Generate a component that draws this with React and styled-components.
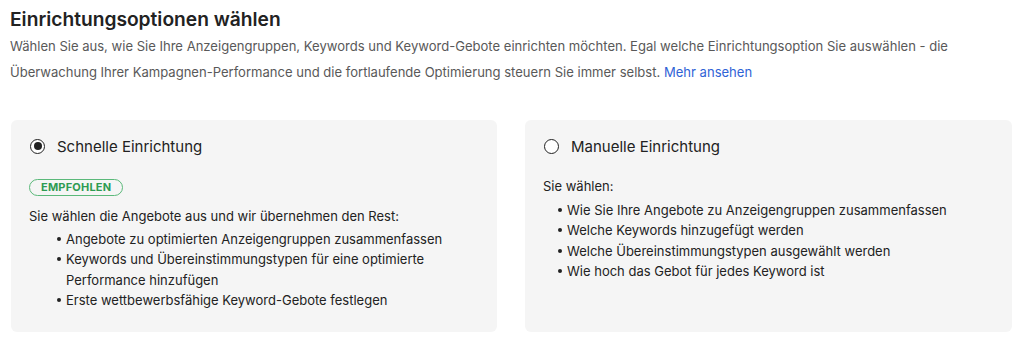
import React, { useState } from 'react';
import styled, { createGlobalStyle } from 'styled-components';

const GlobalStyle = createGlobalStyle`
  body {
    margin: 0;
    background: #ffffff;
    font-family: Inter, "Noto Sans", sans-serif;
    color: #222222;
  }
`;

const Page = styled.div`
  padding: 6px 11px 0 10px;
  width: 1024px;
  box-sizing: border-box;
`;

const Title = styled.h2`
  margin: 0;
  font-size: 19.2px;
  font-weight: 600;
  line-height: 26px;
  color: #222222;
`;

const Intro = styled.p`
  margin: 1px 0 0;
  max-width: 995px;
  font-size: 13.05px;
  line-height: 26px;
  color: #595959;
`;

const Link = styled.a`
  color: #3063d6;
  text-decoration: none;
`;

const Cards = styled.div`
  display: grid;
  grid-template-columns: 486px 487px;
  gap: 28px;
  margin-top: 35px;
  padding-left: 1px;
`;

const Card = styled.div`
  background: #f5f5f5;
  border-radius: 6px;
  height: 212px;
  box-sizing: border-box;
  padding: 15px 18px 0 18px;
  cursor: pointer;
`;

const OptionRow = styled.label`
  display: flex;
  align-items: center;
  gap: 12px;
  height: 22px;
  padding-left: 1px;
  cursor: pointer;
`;

const Radio = styled.span`
  width: 15px;
  height: 15px;
  border-radius: 50%;
  border: 1.3px solid #222222;
  box-sizing: border-box;
  display: flex;
  align-items: center;
  justify-content: center;
  background: #ffffff;
  &::after {
    content: '';
    width: 8px;
    height: 8px;
    border-radius: 50%;
    background: ${({ $checked }) => ($checked ? '#222222' : 'transparent')};
  }
`;

const OptionLabel = styled.span`
  font-size: 15px;
  color: #222222;
`;

const Badge = styled.span`
  display: inline-block;
  margin-top: 22px;
  height: 17px;
  line-height: 15px;
  box-sizing: border-box;
  padding: 0 11px;
  border: 1px solid #5bb97a;
  border-radius: 9px;
  color: #2e9b52;
  font-size: 11px;
  font-weight: 700;
  letter-spacing: 0.2px;
`;

const Lead = styled.p`
  margin: ${({ $top }) => $top}px 0 0;
  font-size: 13px;
  line-height: 20px;
  color: #222222;
`;

const List = styled.ul`
  margin: ${({ $top }) => $top}px 0 0;
  padding-left: ${({ $indent }) => $indent}px;
  list-style: none;
`;

const Item = styled.li`
  position: relative;
  font-size: 13px;
  line-height: 20.3px;
  color: #222222;
  padding-left: 9px;
  &::before {
    content: '';
    position: absolute;
    left: 0;
    top: 8px;
    width: 4px;
    height: 4px;
    border-radius: 50%;
    background: #222222;
  }
`;

const quick = [
  'Angebote zu optimierten Anzeigengruppen zusammenfassen',
  'Keywords und Übereinstimmungstypen für eine optimierte Performance hinzufügen',
  'Erste wettbewerbsfähige Keyword-Gebote festlegen',
];

const manual = [
  'Wie Sie Ihre Angebote zu Anzeigengruppen zusammenfassen',
  'Welche Keywords hinzugefügt werden',
  'Welche Übereinstimmungstypen ausgewählt werden',
  'Wie hoch das Gebot für jedes Keyword ist',
];

const App = () => {
  const [choice, setChoice] = useState('quick');

  return (
    <Page>
      <GlobalStyle />
      <Title>Einrichtungsoptionen wählen</Title>
      <Intro>
        Wählen Sie aus, wie Sie Ihre Anzeigengruppen, Keywords und Keyword-Gebote einrichten möchten. Egal welche
        Einrichtungsoption Sie auswählen - die Überwachung Ihrer Kampagnen-Performance und die fortlaufende Optimierung
        steuern Sie immer selbst. <Link href="#">Mehr ansehen</Link>
      </Intro>
      <Cards>
        <Card onClick={() => setChoice('quick')}>
          <OptionRow>
            <Radio $checked={choice === 'quick'} />
            <OptionLabel>Schnelle Einrichtung</OptionLabel>
          </OptionRow>
          <Badge>EMPFOHLEN</Badge>
          <Lead $top={10}>Sie wählen die Angebote aus und wir übernehmen den Rest:</Lead>
          <List $indent={28} $top={3}>
            {quick.map((t) => (
              <Item key={t}>{t}</Item>
            ))}
          </List>
        </Card>
        <Card onClick={() => setChoice('manual')}>
          <OptionRow>
            <Radio $checked={choice === 'manual'} />
            <OptionLabel>Manuelle Einrichtung</OptionLabel>
          </OptionRow>
          <Lead $top={19}>Sie wählen:</Lead>
          <List $indent={15} $top={4}>
            {manual.map((t) => (
              <Item key={t}>{t}</Item>
            ))}
          </List>
        </Card>
      </Cards>
    </Page>
  );
};

export default App;
